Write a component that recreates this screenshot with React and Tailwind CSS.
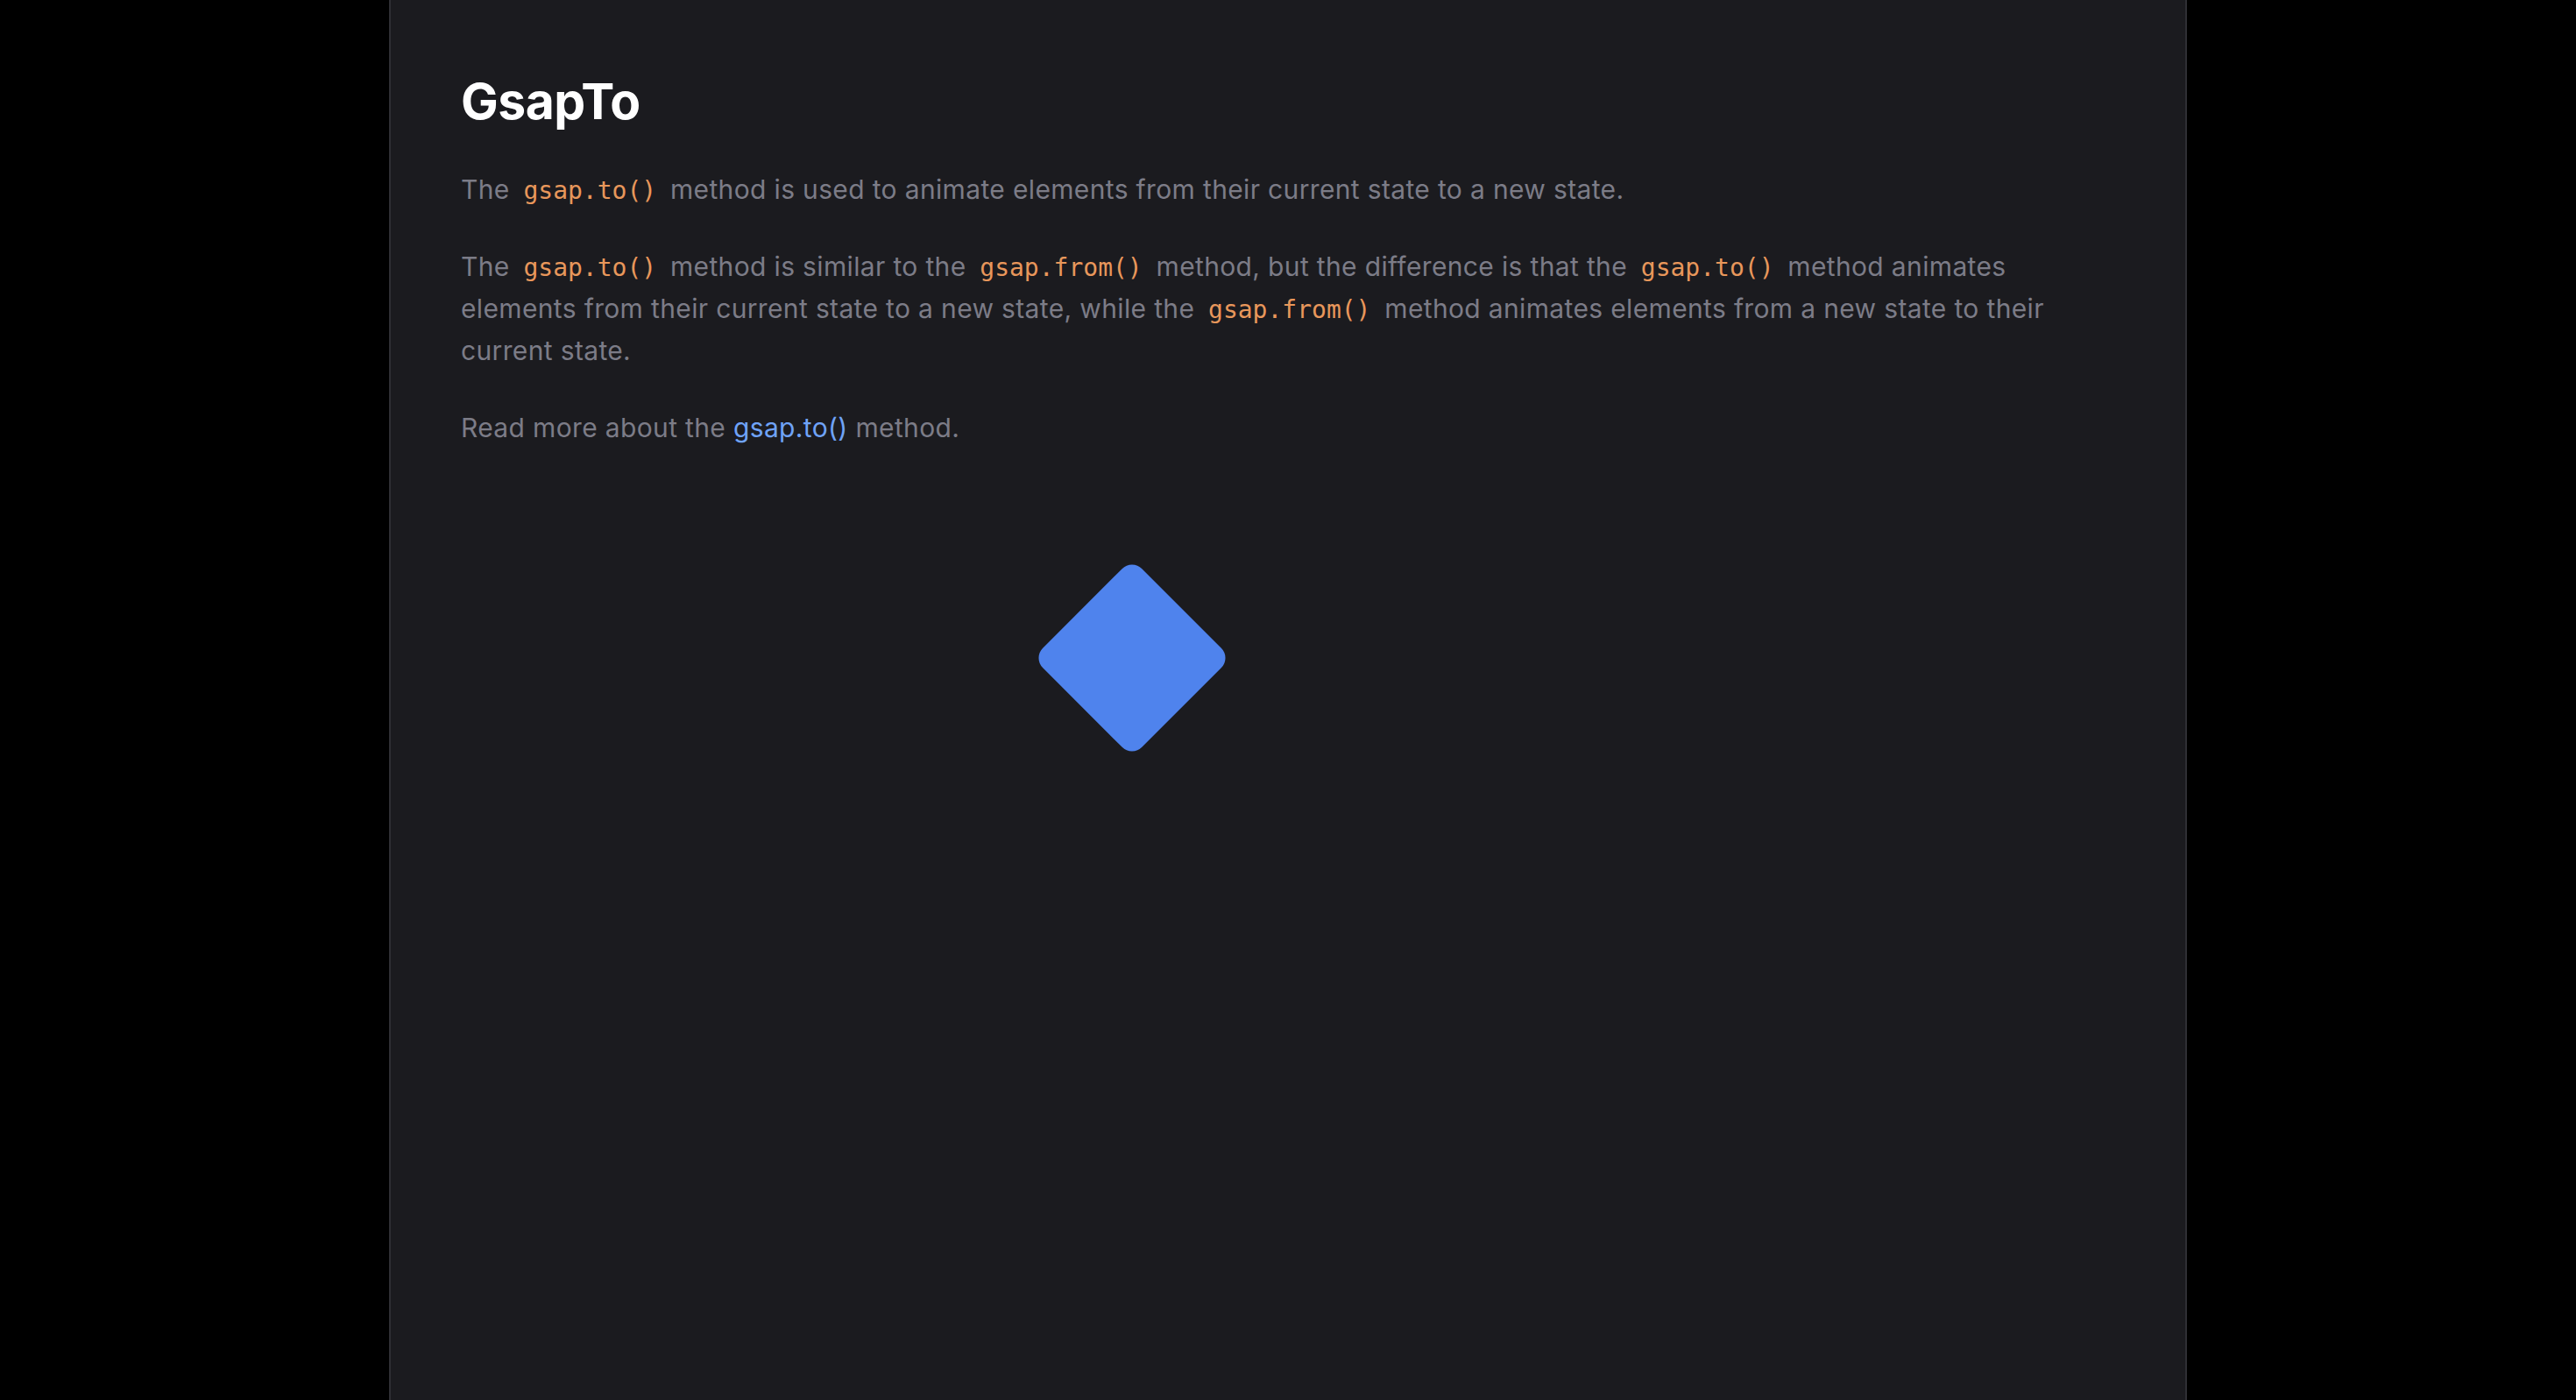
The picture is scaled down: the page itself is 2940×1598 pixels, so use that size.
import React from 'react';

// Inline code token, orange monospace
function Code({ children }) {
    return (
        <code className="px-[7px] text-[28px] leading-none tracking-normal text-[#e8975b] font-['SF_Mono','DejaVu_Sans_Mono',monospace]">
            {children}
        </code>
    );
}

export default function App() {
    return (
        <div className="min-h-screen w-full bg-black">
            <div className="mx-auto min-h-screen w-[2052px] border-x-2 border-[#2f2f34] bg-[#1b1b1f] px-[80px] pt-[84px] font-['Inter','Noto_Sans',sans-serif]">
                <h1 className="mb-[44px] text-[57px] font-bold leading-[64px] tracking-[-0.5px] text-white">GsapTo</h1>

                <div className="space-y-[40px] text-[30px] leading-[48px] tracking-[0.35px] text-[#7c7c87]">
                    <p>
                        The <Code>gsap.to()</Code> method is used to animate elements from their current state to a new state.
                    </p>
                    <p>
                        The <Code>gsap.to()</Code> method is similar to the <Code>gsap.from()</Code> method, but the difference is
                        that the <Code>gsap.to()</Code> method animates elements from their current state to a new state, while
                        the <Code>gsap.from()</Code> method animates elements from a new state to their current state.
                    </p>
                    <p>
                        Read more about the{' '}
                        <a href="#" className="text-[#6fa3f7]">
                            gsap.to()
                        </a>{' '}
                        method.
                    </p>
                </div>

                {/* Animated box, captured mid-tween */}
                <div className="ml-[686px] mt-[159px] h-[160px] w-[160px] rotate-45 rounded-[16px] bg-[#4f83ed]" />
            </div>
        </div>
    );
}
